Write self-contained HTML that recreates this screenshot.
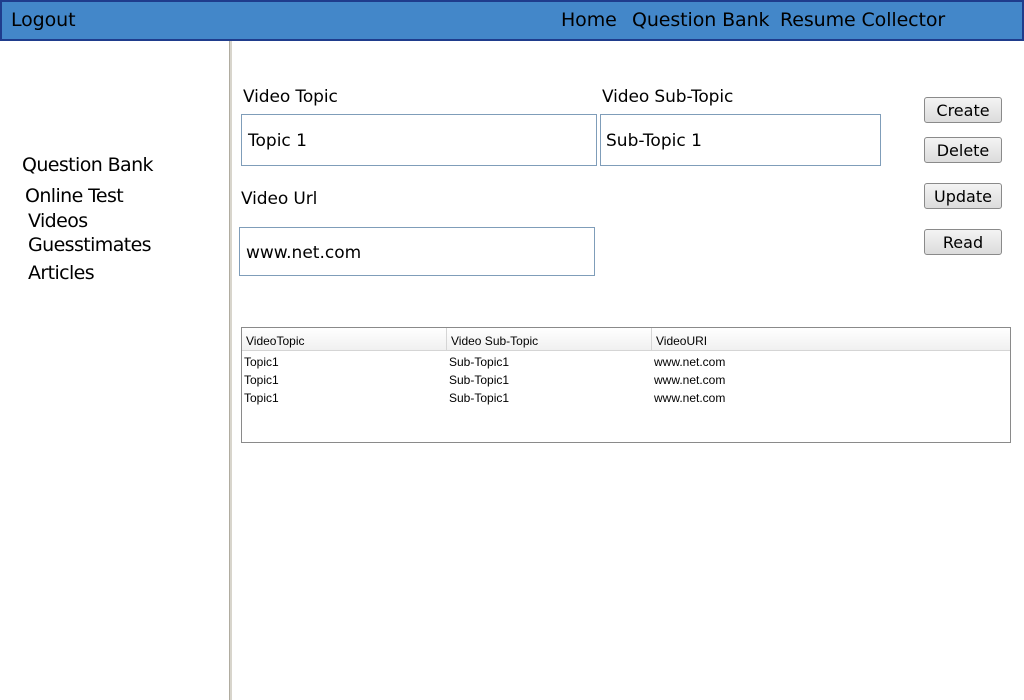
<!DOCTYPE html>
<html><head><style>
*{margin:0;padding:0;box-sizing:border-box}
body{width:1024px;height:700px;background:#fff;position:relative;overflow:hidden;font-family:"DejaVu Sans","Liberation Sans",sans-serif;color:#000}
.a{position:absolute;white-space:nowrap}
#hdr{left:0;top:0;width:1024px;height:41px;background:#4387c9;border:2px solid #1f3c8c}
.h{font-size:19px;top:9px;letter-spacing:-0.1px}
#div{left:229px;top:41px;width:3px;height:659px;background:#d8d5cc;border-left:1px solid #b0aca0}
.s{font-size:19px;letter-spacing:-0.6px}
.l{font-size:17px;letter-spacing:-0.1px}
.in{border:1px solid #7f9db9;background:#fff;font-size:17px;padding-left:6px;padding-top:2px;display:flex;align-items:center}
.btn{left:924px;width:78px;height:26px;border:1px solid #8a8a8a;border-radius:3px;background:linear-gradient(#f4f4f4,#dcdcdc);font-size:16px;text-align:center;line-height:26px}
.t{font-family:"Liberation Sans",sans-serif;font-size:12px}
</style></head><body>
<div id="hdr" class="a"></div>
<div class="a h" style="left:11px">Logout</div>
<div class="a h" style="left:561px">Home</div>
<div class="a h" style="left:632px">Question Bank</div>
<div class="a h" style="left:780px">Resume Collector</div>
<div id="div" class="a"></div>
<div class="a s" style="left:22px;top:154px">Question Bank</div>
<div class="a s" style="left:25px;top:185px">Online Test</div>
<div class="a s" style="left:28px;top:210px">Videos</div>
<div class="a s" style="left:28px;top:234px">Guesstimates</div>
<div class="a s" style="left:28px;top:262px">Articles</div>
<div class="a l" style="left:243px;top:87px">Video Topic</div>
<div class="a l" style="left:602px;top:87px">Video Sub-Topic</div>
<div class="a l" style="left:241px;top:189px">Video Url</div>
<div class="a in" style="left:241px;top:114px;width:356px;height:52px">Topic 1</div>
<div class="a in" style="left:600px;top:114px;width:281px;height:52px;padding-left:5px">Sub-Topic 1</div>
<div class="a in" style="left:239px;top:227px;width:356px;height:49px">www.net.com</div>
<div class="a btn" style="top:97px">Create</div>
<div class="a btn" style="top:137px">Delete</div>
<div class="a btn" style="top:183px">Update</div>
<div class="a btn" style="top:229px">Read</div>
<div class="a" style="left:241px;top:327px;width:770px;height:116px;border:1px solid #8a8a8a"></div>
<div class="a" style="left:242px;top:328px;width:768px;height:23px;background:linear-gradient(#fff,#f0f0f0);border-bottom:1px solid #d5d5d5"></div>
<div class="a" style="left:446px;top:328px;width:1px;height:22px;background:#d5d5d5"></div>
<div class="a" style="left:651px;top:328px;width:1px;height:22px;background:#d5d5d5"></div>
<div class="a t" style="left:246px;top:334px">VideoTopic</div>
<div class="a t" style="left:451px;top:334px">Video Sub-Topic</div>
<div class="a t" style="left:656px;top:334px">VideoURI</div>
<div class="a t" style="left:244px;top:355px">Topic1</div>
<div class="a t" style="left:449px;top:355px">Sub-Topic1</div>
<div class="a t" style="left:654px;top:355px">www.net.com</div>
<div class="a t" style="left:244px;top:373px">Topic1</div>
<div class="a t" style="left:449px;top:373px">Sub-Topic1</div>
<div class="a t" style="left:654px;top:373px">www.net.com</div>
<div class="a t" style="left:244px;top:391px">Topic1</div>
<div class="a t" style="left:449px;top:391px">Sub-Topic1</div>
<div class="a t" style="left:654px;top:391px">www.net.com</div>
</body></html>
